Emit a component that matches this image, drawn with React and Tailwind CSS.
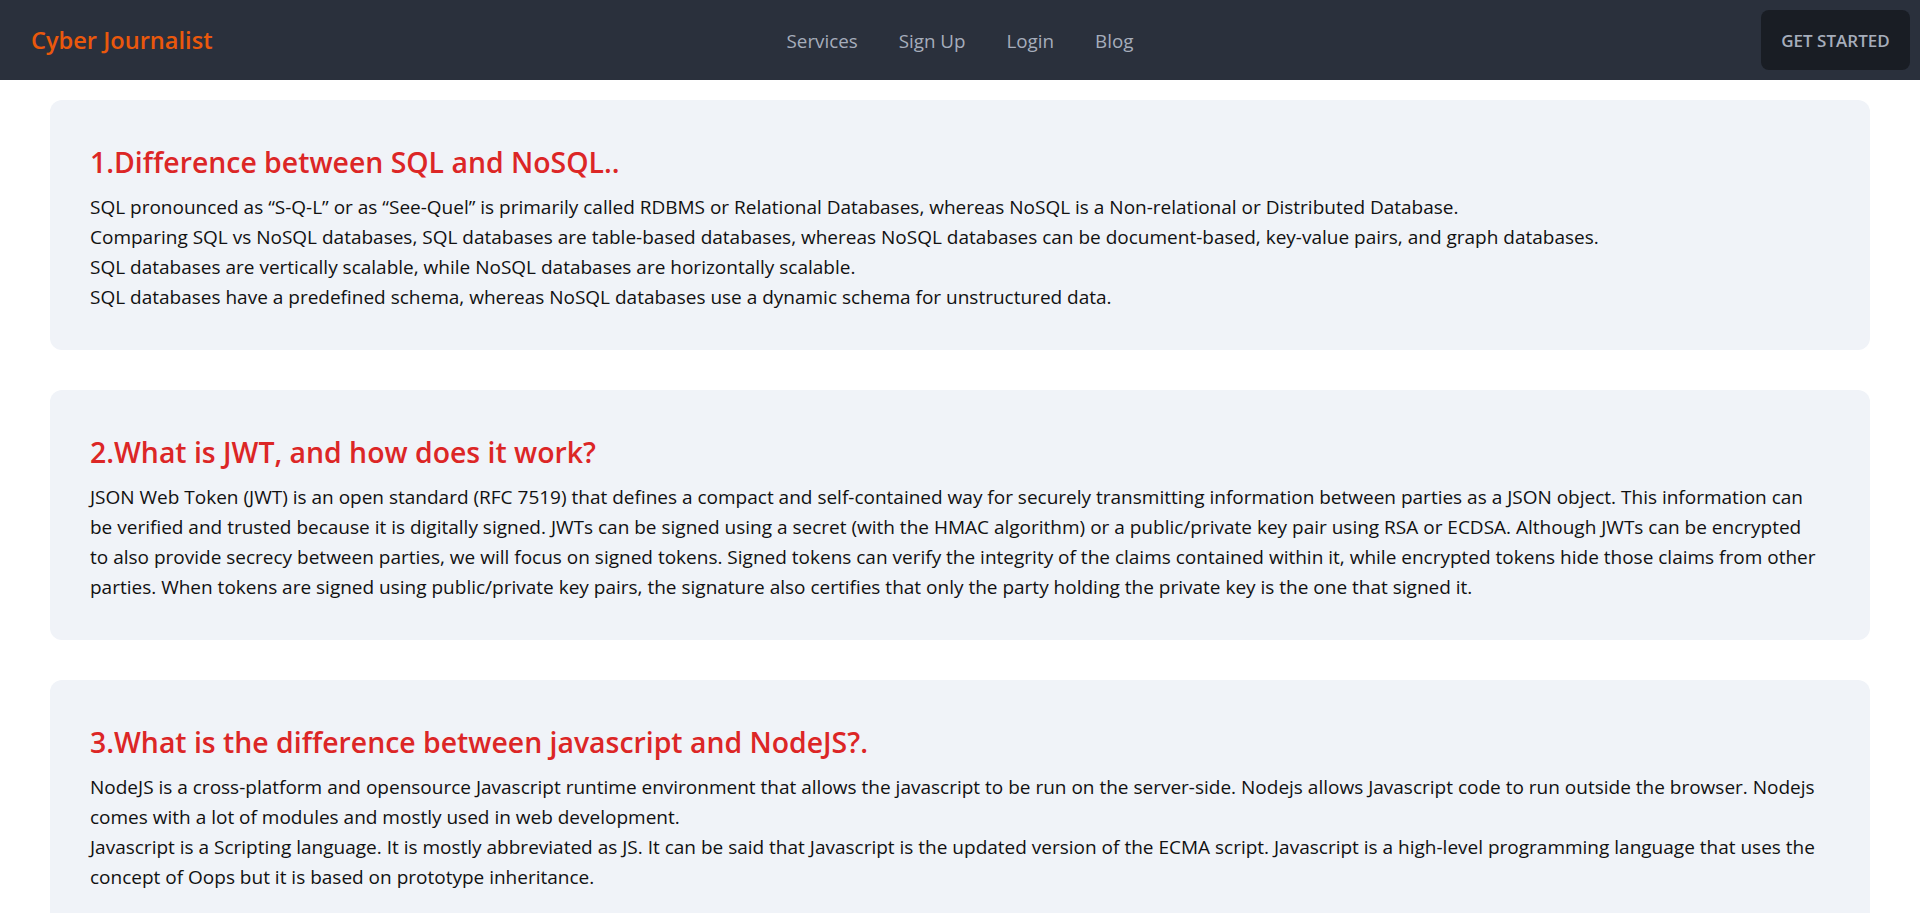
import React from "react";

const cards = [
  {
    title: "1.Difference between SQL and NoSQL..",
    paras: [
      "SQL pronounced as “S-Q-L” or as “See-Quel” is primarily called RDBMS or Relational Databases, whereas NoSQL is a Non-relational or Distributed Database.",
      "Comparing SQL vs NoSQL databases, SQL databases are table-based databases, whereas NoSQL databases can be document-based, key-value pairs, and graph databases.",
      "SQL databases are vertically scalable, while NoSQL databases are horizontally scalable.",
      "SQL databases have a predefined schema, whereas NoSQL databases use a dynamic schema for unstructured data.",
    ],
  },
  {
    title: "2.What is JWT, and how does it work?",
    paras: [
      "JSON Web Token (JWT) is an open standard (RFC 7519) that defines a compact and self-contained way for securely transmitting information between parties as a JSON object. This information can be verified and trusted because it is digitally signed. JWTs can be signed using a secret (with the HMAC algorithm) or a public/private key pair using RSA or ECDSA. Although JWTs can be encrypted to also provide secrecy between parties, we will focus on signed tokens. Signed tokens can verify the integrity of the claims contained within it, while encrypted tokens hide those claims from other parties. When tokens are signed using public/private key pairs, the signature also certifies that only the party holding the private key is the one that signed it.",
    ],
  },
  {
    title: "3.What is the difference between javascript and NodeJS?.",
    paras: [
      "NodeJS is a cross-platform and opensource Javascript runtime environment that allows the javascript to be run on the server-side. Nodejs allows Javascript code to run outside the browser. Nodejs comes with a lot of modules and mostly used in web development.",
      "Javascript is a Scripting language. It is mostly abbreviated as JS. It can be said that Javascript is the updated version of the ECMA script. Javascript is a high-level programming language that uses the concept of Oops but it is based on prototype inheritance.",
    ],
  },
];

export default function App() {
  return (
    <div className="min-h-screen bg-white font-['Open_Sans',sans-serif]">
      <header className="grid h-20 grid-cols-[1fr_auto_1fr] items-center bg-[#2a303c]">
        <a href="#" className="mt-[2px] justify-self-start pl-[31px] text-[23.6px] font-semibold text-[#ea580c]">
          Cyber Journalist
        </a>
        <nav className="mt-[2px] flex items-center gap-[41px] text-[18.8px] text-[#a6adbb]">
          <a href="#">Services</a>
          <a href="#">Sign Up</a>
          <a href="#">Login</a>
          <a href="#">Blog</a>
        </nav>
        <div className="mr-[10px] justify-self-end">
          <button className="h-[60px] w-[149px] rounded-lg bg-[#191d24] pt-[2px] text-[17px] font-semibold text-[#a6adbb]">
            GET STARTED
          </button>
        </div>
      </header>
      <main className="flex flex-col gap-10 pt-5">
        {cards.map((c) => (
          <section key={c.title} className="mx-[50px] rounded-xl bg-[#f0f3f8] pb-[38px] pl-10 pr-[49px] pt-[44px]">
            <h2 className="mb-3 text-[28.4px] font-semibold leading-9 text-[#dc2626]">{c.title}</h2>
            {c.paras.map((p, i) => (
              <p key={i} className="text-[19px] leading-[30px] text-[#111111]">
                {p}
              </p>
            ))}
          </section>
        ))}
      </main>
    </div>
  );
}
